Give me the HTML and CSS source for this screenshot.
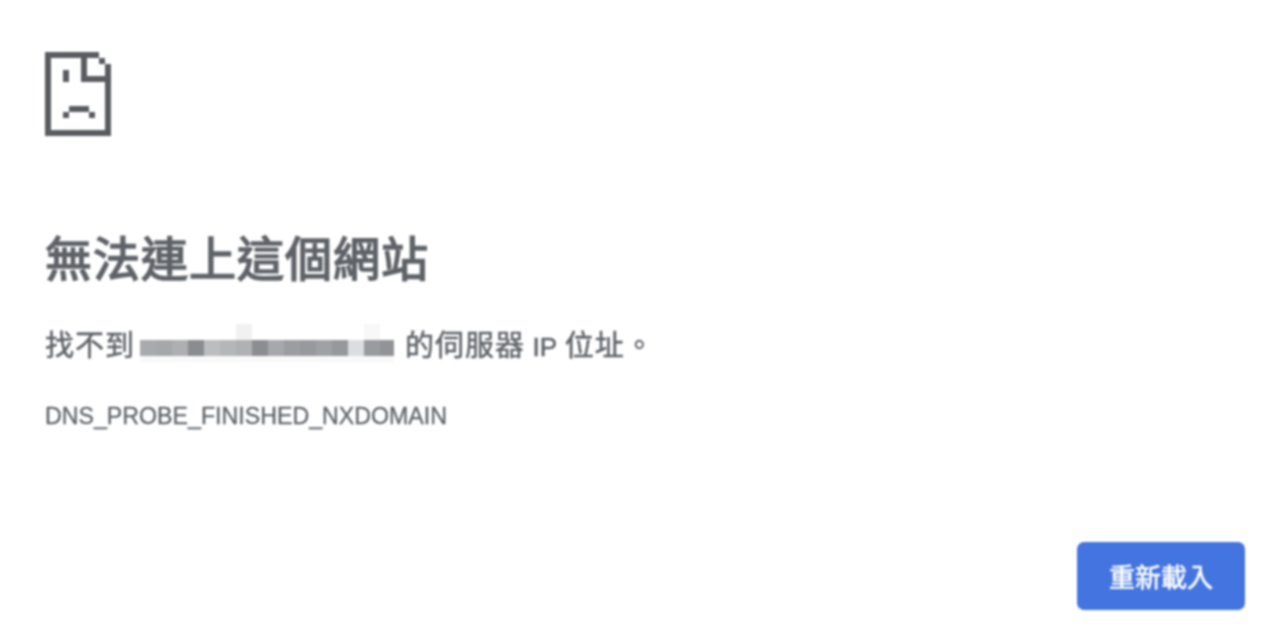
FILE: index.html
```html
<!DOCTYPE html>
<html lang="zh-Hant">
<head>
  <meta charset="UTF-8">
  <meta name="viewport" content="width=device-width, initial-scale=1.0">
  <title>無法連上這個網站</title>
  <link rel="stylesheet" href="styles.css">
</head>
<body>
  <div class="error-page">
    <svg class="sad-file" viewBox="0 0 66 84" aria-hidden="true">
      <rect x="0" y="0" width="54" height="6"/>
      <rect x="54" y="6" width="6" height="6"/>
      <rect x="60" y="12" width="6" height="72"/>
      <rect x="0" y="0" width="6" height="84"/>
      <rect x="0" y="78" width="66" height="6"/>
      <rect x="36" y="0" width="6" height="30"/>
      <rect x="36" y="24" width="30" height="6"/>
      <rect x="18" y="18" width="6" height="12"/>
      <rect x="24" y="54" width="20" height="6"/>
      <rect x="18" y="60" width="6" height="6"/>
      <rect x="44" y="60" width="6" height="6"/>
    </svg>
    <h1 class="title">無法連上這個網站</h1>
    <p class="message">找不到<svg class="redacted" viewBox="0 0 256 40" aria-hidden="true">
        <rect x="0" y="32" width="254" height="7" fill="#f9f9f9"/>
        <rect x="96" y="0" width="16" height="16" fill="#f0f1f0"/>
        <rect x="224" y="0" width="16" height="16" fill="#f8f8f8"/>
        <rect x="0" y="16" width="16" height="16" fill="#a9aaad"/>
        <rect x="16" y="16" width="16" height="16" fill="#a6a7a9"/>
        <rect x="32" y="16" width="16" height="16" fill="#aeafb0"/>
        <rect x="48" y="16" width="16" height="16" fill="#8b8c90"/>
        <rect x="64" y="16" width="16" height="16" fill="#bcbdbf"/>
        <rect x="80" y="16" width="16" height="16" fill="#b5b6b8"/>
        <rect x="96" y="16" width="16" height="16" fill="#b0b1b3"/>
        <rect x="112" y="16" width="16" height="16" fill="#8c8d91"/>
        <rect x="128" y="16" width="16" height="16" fill="#a7a8ac"/>
        <rect x="144" y="16" width="16" height="16" fill="#9c9da1"/>
        <rect x="160" y="16" width="16" height="16" fill="#98999d"/>
        <rect x="176" y="16" width="16" height="16" fill="#a0a1a5"/>
        <rect x="192" y="16" width="16" height="16" fill="#97989c"/>
        <rect x="208" y="16" width="16" height="16" fill="#dcdde0"/>
        <rect x="224" y="16" width="16" height="16" fill="#9a9b9f"/>
        <rect x="240" y="16" width="14" height="16" fill="#929397"/>
      </svg>的伺服器 <span class="ip">IP</span> 位址。</p>
    <div class="error-code">DNS_PROBE_FINISHED_NXDOMAIN</div>
    <button class="reload">重新載入</button>
  </div>
</body>
</html>
```

FILE: styles.css
```css
html, body {
  margin: 0;
  height: 100%;
  background-color: white;
}
body {
  font-family: "Liberation Sans", "Noto Sans CJK TC", sans-serif;
  color: #5f6368;
}
.error-page {
  display: flex;
  flex-direction: column;
  align-items: flex-start;
  box-sizing: border-box;
  height: 100vh;
  padding: 52px 27px 24px 45px;
  filter: blur(0.8px);
}
.sad-file {
  display: block;
  width: 66px;
  height: 84px;
  fill: #5a5c60;
}
.title {
  font-size: 47px;
  font-weight: 400;
  -webkit-text-stroke: 1.7px #5f6368;
  line-height: 60px;
  letter-spacing: 1px;
  margin: 94px 0 0;
}
.message {
  font-size: 29px;
  line-height: 40px;
  letter-spacing: 1px;
  word-spacing: -1.5px;
  -webkit-text-stroke: 0.5px #5f6368;
  margin: 36px 0 0;
}
.ip {
  font-size: 26px;
  letter-spacing: 0;
}
.redacted {
  vertical-align: top;
  width: 256px;
  height: 40px;
  margin: -2px 9px 2px 5px;
}
.error-code {
  font-size: 23.2px;
  line-height: 30px;
  -webkit-text-stroke: 0.3px #5f6368;
  margin-top: 34px;
}
.reload {
  align-self: flex-end;
  margin-top: auto;
  width: 168px;
  height: 68px;
  padding: 0 0 2px;
  font-family: inherit;
  font-size: 26px;
  -webkit-text-stroke: 0.6px white;
  color: white;
  background-color: #4374e0;
  border: 0;
  border-radius: 7px;
  cursor: pointer;
}
```
